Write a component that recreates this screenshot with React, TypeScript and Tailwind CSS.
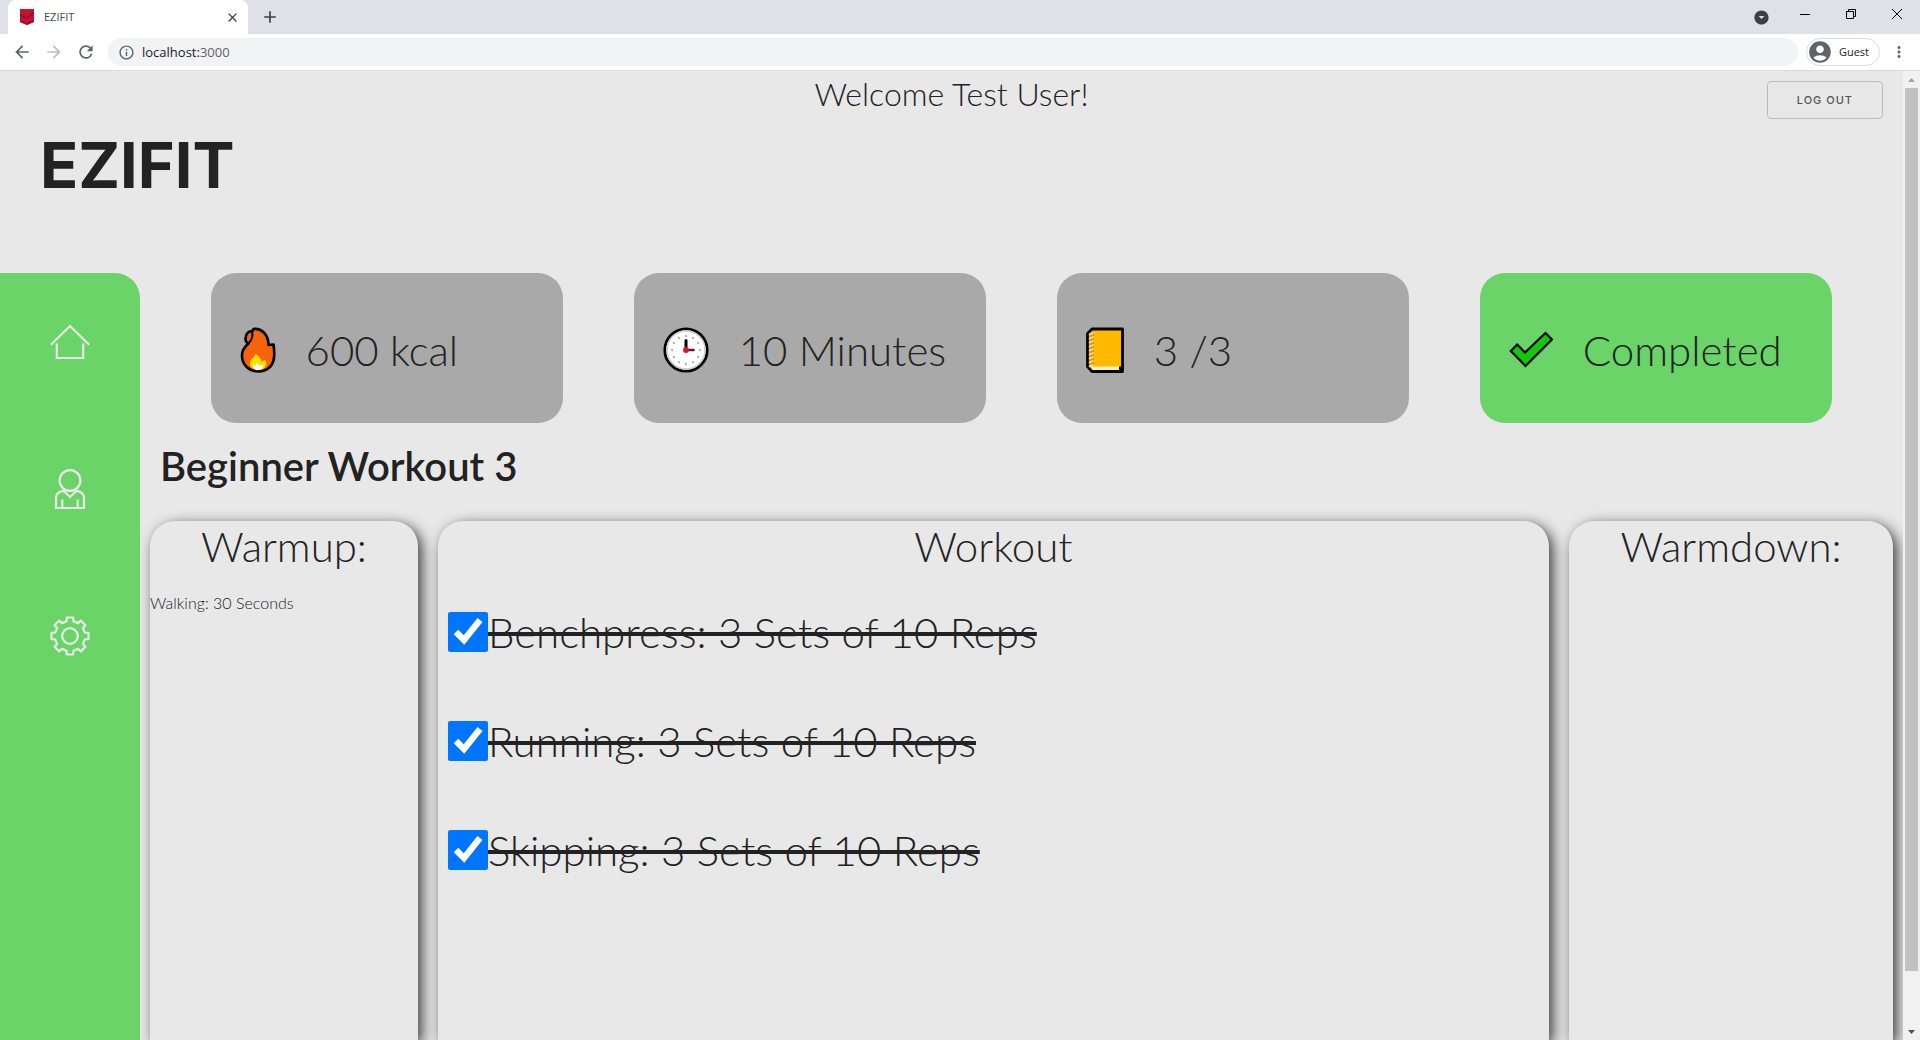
import React, { useState } from 'react';
import type { ReactNode } from 'react';
import {
  MdAccountCircle,
  MdAdd,
  MdArrowBack,
  MdArrowDropDownCircle,
  MdArrowForward,
  MdClose,
  MdInfoOutline,
  MdMoreVert,
  MdRefresh,
} from 'react-icons/md';

function Favicon() {
  return (
    <svg viewBox="0 0 14 16" className="h-4 w-3.5" aria-hidden="true">
      <path d="M0 0H14V13L7 16L0 13Z" fill="#c4142f" />
      <path d="M0 5L7 8L14 2V5L7 10L0 8Z" fill="#8f1626" />
      <path d="M0 11L7 13L14 10V13L7 16L0 13Z" fill="#a3142a" />
    </svg>
  );
}

function TabStrip() {
  return (
    <div className="flex h-[34px] items-center bg-[#dee1e6] pl-2">
      <div className="flex h-full w-60 items-center rounded-t-lg bg-white pr-2 pl-3">
        <Favicon />
        <span className="ml-2.5 flex-1 text-[11px] text-[#45494d]">EZIFIT</span>
        <button type="button" aria-label="Close tab" className="text-[#3c4043]">
          <MdClose size={15} />
        </button>
      </div>
      <button type="button" aria-label="New tab" className="ml-3 text-[#3c4043]">
        <MdAdd size={20} />
      </button>
      <div className="ml-auto flex items-center text-black">
        <button type="button" aria-label="Search tabs" className="mr-3 text-[#3c4043]">
          <MdArrowDropDownCircle size={17} />
        </button>
        <button type="button" aria-label="Minimize" className="flex w-[46px] justify-center pb-1.5">
          <svg viewBox="0 0 10 10" className="size-2.5">
            <path d="M0 5.5H10" stroke="currentColor" />
          </svg>
        </button>
        <button type="button" aria-label="Restore" className="flex w-[46px] justify-center pb-1.5">
          <svg viewBox="0 0 10 10" className="size-2.5" fill="none" stroke="currentColor">
            <path d="M.5 2.5H7.5V9.5H.5ZM2.5 2.5V.5H9.5V7.5H7.5" />
          </svg>
        </button>
        <button type="button" aria-label="Close window" className="flex w-[46px] justify-center pb-1.5">
          <svg viewBox="0 0 10 10" className="size-2.5" fill="none" stroke="currentColor">
            <path d="M0 0L10 10M10 0L0 10" />
          </svg>
        </button>
      </div>
    </div>
  );
}

function Toolbar() {
  return (
    <div className="flex h-[37px] items-center border-b border-[#d8dadd] bg-white pr-3 pl-3 text-[#5f6368]">
      <button type="button" aria-label="Back">
        <MdArrowBack size={20} />
      </button>
      <button type="button" aria-label="Forward" className="ml-3 text-[#babcbe]">
        <MdArrowForward size={20} />
      </button>
      <button type="button" aria-label="Reload" className="ml-3">
        <MdRefresh size={20} />
      </button>
      <label className="ml-3 flex h-7 flex-1 items-center rounded-full bg-[#f1f3f4] pl-2.5">
        <MdInfoOutline size={17} />
        <span className="ml-[7px] text-[13px] leading-5">
          <span className="text-[#202124]">localhost:</span>3000
        </span>
      </label>
      <button
        type="button"
        className="ml-2 flex h-7 items-center rounded-full border border-[#dadce0] pr-2.5 text-[11px] text-[#202124]"
      >
        <MdAccountCircle size={26} className="mr-1.5 text-[#5f6368]" />
        Guest
      </button>
      <button type="button" aria-label="Menu" className="ml-2.5">
        <MdMoreVert size={18} />
      </button>
    </div>
  );
}

function HomeIcon() {
  return (
    <svg viewBox="0 0 40 40" className="size-10" fill="none" stroke="currentColor" strokeWidth="2.2">
      <path d="M.8 22.8L20 4L39.2 22.8" />
      <path d="M6.8 21.5V36H33.2V21.5" />
    </svg>
  );
}

function UserIcon() {
  return (
    <svg viewBox="0 0 40 40" className="size-10" fill="none" stroke="currentColor" strokeWidth="2.2">
      <circle cx="20" cy="11.5" r="10.4" />
      <path d="M13.500 21.800C8.500 22.500 6 25 6 29V39H34V29C34 25 31.500 22.500 26.500 21.800L20 28Z" />
      <path d="M12.300 30.500V39M27.700 30.500V39" />
    </svg>
  );
}

function GearIcon() {
  const outline: string[] = [];
  for (let i = 0; i < 8; i += 1) {
    const base = (i * 45 * Math.PI) / 180;
    const points: [number, number][] = [
      [-13, 15.2],
      [-10, 18.8],
      [10, 18.8],
      [13, 15.2],
    ];
    points.forEach(([deg, r]) => {
      const a = base + (deg * Math.PI) / 180;
      outline.push(`${20 + r * Math.sin(a)},${20 - r * Math.cos(a)}`);
    });
  }
  return (
    <svg viewBox="0 0 40 40" className="size-10" fill="none" stroke="currentColor" strokeWidth="2.2" strokeLinejoin="round">
      <polygon points={outline.join(' ')} />
      <circle cx="20" cy="20" r="7.800" />
    </svg>
  );
}

function Sidebar() {
  return (
    <nav className="flex w-35 shrink-0 flex-col items-center gap-[107px] rounded-tr-[25px] bg-[#6ad468] pt-[49px] text-[#e8e8e8]">
      <a href="#home" aria-label="Home">
        <HomeIcon />
      </a>
      <a href="#profile" aria-label="Profile">
        <UserIcon />
      </a>
      <a href="#settings" aria-label="Settings">
        <GearIcon />
      </a>
    </nav>
  );
}

function Fire() {
  return (
    <svg viewBox="0 0 36 46" className="h-[46px] w-9" aria-hidden="true">
      <path
        d="M13.500 2C21 1 28.500 7 28.500 18L33.500 17.500C34.500 24 34.500 27 34 31C33 39 27 44.500 18.500 44.500C9 44.500 2 38 2 28.500C2 22 5.500 19 8.500 16.500C6 15.500 5 12.500 6 9C6.500 6 9 4 12 4.500Z"
        fill="#f7630c"
        stroke="#000"
        strokeWidth="2.600"
        strokeLinejoin="round"
      />
      <path d="M8.500 16.500C12 13 13 9 12.200 4.500" fill="none" stroke="#000" strokeWidth="2" />
      <path d="M15 27C19 29 21 31.500 21.500 34.500L25 33C28 37 26 43 18.500 43C11 43 8.500 37.500 10.500 33.500C12.500 31 15 30 15 27Z" fill="#ffe000" />
      <path d="M16.500 36L19 38.500L23 38C23.500 41 21.500 43 18 43C14.500 43 12 40.500 13.500 37.500L16 39Z" fill="#fff" />
    </svg>
  );
}

function Clock() {
  const marks = Array.from({ length: 12 }, (_, i) => (i * Math.PI) / 6);
  return (
    <svg viewBox="0 0 46 46" className="size-[46px]" aria-hidden="true">
      <circle cx="23" cy="23" r="21.200" fill="#fff" stroke="#000" strokeWidth="2.800" />
      <circle cx="23" cy="23" r="19" fill="none" stroke="#ccc" strokeWidth="1.500" />
      {marks.map((a) => (
        <circle key={a} cx={23 + 14 * Math.sin(a)} cy={23 - 14 * Math.cos(a)} r="1.200" fill="#b4b4b4" />
      ))}
      <path d="M23 23V13.500" stroke="#000" strokeWidth="3" strokeLinecap="round" />
      <path d="M23 23H30.500" stroke="#5b2226" strokeWidth="2.600" strokeLinecap="round" />
      <circle cx="23" cy="23" r="2.900" fill="#e81224" />
    </svg>
  );
}

function Notebook() {
  const rings = Array.from({ length: 9 }, (_, i) => 6 + i * 4);
  return (
    <svg viewBox="0 0 38 46" className="h-[46px] w-[38px]" aria-hidden="true">
      <path d="M6 2H36.500V44.500H6L1.500 39.500V6.500Z" fill="#ffb900" stroke="#000" strokeWidth="2.800" strokeLinejoin="round" />
      <path d="M4 39.500H33.500V43H7Z" fill="#fff3b0" />
      <path d="M33 39.500H36V43.500H33Z" fill="#000" />
      <path d="M3 7V38.500H8V4Z" fill="#e09b00" />
      {rings.map((y) => (
        <path key={y} d={`M3.500 ${y + 1.5}L7 ${y}`} stroke="#f1e3c4" strokeWidth="1.600" strokeLinecap="round" />
      ))}
    </svg>
  );
}

function Tick() {
  return (
    <svg viewBox="0 0 44 46" className="h-[46px] w-11" aria-hidden="true">
      <path d="M1.800 24L8.200 17.600L16 25.500L36.500 6L43 12.500L16.500 39Z" fill="#16c60c" stroke="#000" strokeWidth="2.200" />
    </svg>
  );
}

function StatCard({ icon, text, done = false }: { icon: ReactNode; text: string; done?: boolean }) {
  return (
    <div
      className={
        done
          ? 'flex h-[150px] w-1/5 items-center gap-[30px] rounded-[25px] bg-[#6ad468] pt-1 pl-[29px]'
          : 'flex h-[150px] w-1/5 items-center gap-[30px] rounded-[25px] bg-[#a9a9a9] pt-1 pl-[29px]'
      }
    >
      {icon}
      <p className="text-[42px] leading-[60px] font-light whitespace-nowrap">{text}</p>
    </div>
  );
}

function Panel({ title, className, children }: { title: string; className: string; children?: ReactNode }) {
  return (
    <section className={`${className} rounded-t-[25px] bg-[#e8e8e8] shadow-[4px_4px_14px_rgba(0,0,0,0.75)]`}>
      <h2 className="text-center text-[42px] leading-[50px] font-light">{title}</h2>
      {children}
    </section>
  );
}

const EXERCISES = [
  'Benchpress: 3 Sets of 10 Reps',
  'Running: 3 Sets of 10 Reps',
  'Skipping: 3 Sets of 10 Reps',
];

function Exercise({ name }: { name: string }) {
  const [done, setDone] = useState(true);
  return (
    <label className="flex items-center">
      <input
        type="checkbox"
        checked={done}
        onChange={() => setDone(!done)}
        className="size-10 shrink-0 accent-[#0075ff]"
      />
      <span
        className={
          done
            ? 'text-[42px] leading-[48px] font-light line-through decoration-4'
            : 'text-[42px] leading-[48px] font-light'
        }
      >
        {name}
      </span>
    </label>
  );
}

function ScrollBar() {
  return (
    <div className="flex w-[17px] shrink-0 flex-col items-center bg-[#f1f1f1]" aria-hidden="true">
      <svg viewBox="0 0 17 17" className="size-[17px]">
        <path d="M5 11L8.500 7L12 11Z" fill="#a3a3a3" />
      </svg>
      <div className="w-[13px] flex-[883] bg-[#c1c1c1]" />
      <div className="flex-[52]" />
      <svg viewBox="0 0 17 17" className="size-[17px]">
        <path d="M5 7L8.500 11L12 7Z" fill="#505050" />
      </svg>
    </div>
  );
}

export default function App() {
  return (
    <div className="flex h-screen flex-col overflow-hidden font-['Open_Sans',sans-serif]">
      <TabStrip />
      <Toolbar />
      <div className="flex min-h-0 flex-1 bg-[#e8e8e8]">
        <div className="flex min-w-0 flex-1 flex-col overflow-hidden font-['Lato',sans-serif] text-[#222]">
          <header className="grid h-[202px] shrink-0 grid-cols-[1fr_auto_1fr] items-start px-5">
            <h1 className="mt-[54px] ml-5 font-['Inter',sans-serif] text-[63px] leading-[80px] font-bold">EZIFIT</h1>
            <p className="text-[32px] leading-[46px] font-light">Welcome Test User!</p>
            <button
              type="button"
              className="mt-2.5 h-[38px] justify-self-end rounded border border-[#bbb] px-[29px] font-['Inter',sans-serif] text-[11px] font-medium tracking-[1px] text-[#555]"
            >
              LOG OUT
            </button>
          </header>
          <div className="flex min-h-0 flex-1">
            <Sidebar />
            <main className="flex min-w-0 flex-1 flex-col">
              <div className="flex justify-evenly">
                <StatCard icon={<Fire />} text="600 kcal" />
                <StatCard icon={<Clock />} text="10 Minutes" />
                <StatCard icon={<Notebook />} text="3 /3" />
                <StatCard icon={<Tick />} text="Completed" done />
              </div>
              <h2 className="mt-5 ml-5 text-[40px] leading-[46px] font-semibold">Beginner Workout 3</h2>
              <div className="mt-8 flex min-h-0 flex-1 gap-5 px-2.5">
                <Panel title="Warmup:" className="w-[268px] shrink-0">
                  <p className="mt-5 text-[16px] leading-6 font-light">Walking: 30 Seconds</p>
                </Panel>
                <Panel title="Workout" className="min-w-0 flex-1">
                  <div className="mt-[37px] flex flex-col gap-[61px] pl-2.5">
                    {EXERCISES.map((name) => (
                      <Exercise key={name} name={name} />
                    ))}
                  </div>
                </Panel>
                <Panel title="Warmdown:" className="w-[324px] shrink-0" />
              </div>
            </main>
          </div>
        </div>
        <ScrollBar />
      </div>
    </div>
  );
}
